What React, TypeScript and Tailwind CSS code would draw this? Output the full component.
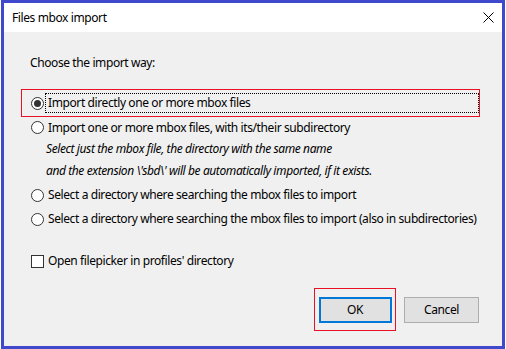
import React from "react";

const font = { fontFamily: '"Noto Sans", "Open Sans", sans-serif' };

function Radio({ checked = false }: { checked?: boolean }) {
  return (
    <span className="flex h-[13px] w-[13px] shrink-0 items-center justify-center rounded-full border border-[#333333] bg-white">
      {checked && <span className="h-[7px] w-[7px] rounded-full bg-[#333333]" />}
    </span>
  );
}

export default function App() {
  return (
    <div className="h-[349px] w-[506px] overflow-hidden bg-white text-[12px] tracking-[-0.4px] text-black" style={font}>
      <div className="ml-[1px] flex h-[349px] w-[504px] flex-col border-[3px] border-[#4048cc]">
        <div className="flex h-[29px] shrink-0 items-center justify-between bg-white pl-[8px] pr-[7px]">
          <span className="leading-[16px]">Files mbox import</span>
          <svg width="11" height="11" viewBox="0 0 11 11" className="mr-[1px]">
            <path d="M0.5 0.5 L10.5 10.5 M10.5 0.5 L0.5 10.5" stroke="#000" strokeWidth="1" />
          </svg>
        </div>
        <div className="flex flex-1 flex-col bg-[#f0f0f0]">
          <div className="ml-[26px] mt-[23px] h-[16px] leading-[16px]">Choose the import way:</div>
          <div className="ml-[17px] mt-[18px] flex h-[28px] w-[459px] items-center overflow-hidden border border-[#e81123]">
            <span className="ml-[9px]">
              <Radio checked />
            </span>
            <div className="ml-[1px] flex h-[20px] w-[434px] shrink-0 items-center border border-dotted border-black pl-[2px] leading-[16px]">
              Import directly one or more mbox files
            </div>
          </div>
          <div className="ml-[27px] flex h-[21px] items-center">
            <Radio />
            <span className="ml-[4px] leading-[16px]">Import one or more mbox files, with its/their subdirectory</span>
          </div>
          <div className="ml-[42px] flex h-[22px] items-center italic leading-[16px]">
            Select just the mbox file, the directory with the same name
          </div>
          <div className="ml-[42px] flex h-[22px] items-center italic leading-[16px]">
            and the extension \'sbd\' will be automatically imported, if it exists.
          </div>
          <div className="ml-[27px] mt-[2px] flex h-[22px] items-center">
            <Radio />
            <span className="ml-[4px] leading-[16px]">Select a directory where searching the mbox files to import</span>
          </div>
          <div className="ml-[27px] mt-[2px] flex h-[22px] items-center">
            <Radio />
            <span className="ml-[4px] whitespace-nowrap leading-[16px]">
              Select a directory where searching the mbox files to import (also in subdirectories)
            </span>
          </div>
          <div className="ml-[27px] mt-[20px] flex h-[22px] items-center">
            <span className="h-[13px] w-[13px] shrink-0 border border-[#333333] bg-white" />
            <span className="ml-[4px] leading-[16px]">Open filepicker in profiles' directory</span>
          </div>
          <div className="mt-[16px] flex justify-end pr-[23px]">
            <div className="flex h-[43px] w-[82px] items-center justify-center border border-[#e81123]">
              <button className="flex h-[26px] w-[73px] items-center justify-center border-2 border-[#0078d7] bg-[#e1e1e1] leading-[16px]">
                OK
              </button>
            </div>
            <button className="ml-[8px] mt-[9px] flex h-[26px] w-[75px] items-center justify-center border border-[#adadad] bg-[#e1e1e1] leading-[16px]">
              Cancel
            </button>
          </div>
        </div>
      </div>
    </div>
  );
}
